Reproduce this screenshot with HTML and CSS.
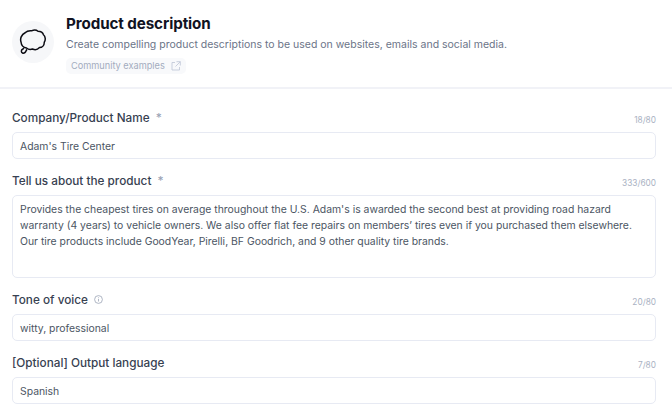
FILE: index.html
```html
<!DOCTYPE html>
<html lang="en">
<head>
<meta charset="utf-8">
<title>Product description</title>
<link rel="stylesheet" href="styles.css">
</head>
<body>
<header class="head">
  <div class="avatar">
    <svg width="28" height="26" viewBox="0 0 28 26" fill="none" stroke="#0b0b12" stroke-width="1.5" stroke-linejoin="round">
      <path d="M6.500 3.500C8.500 1.500 11 2 12.500 1.800C14.500.8 17.500.9 19 2.200C21.500 2.200 23.800 3.500 24.500 5.800C26.500 7.500 26.800 11 25.300 13.200C25.300 16 23.300 18.500 20.500 18.600C18.500 20.800 15.500 21 13.500 20C11.500 20.700 9 20.300 7.500 19C4.500 18.500 2.300 16 2 13C1 10 2 5.500 6.500 3.500Z"/>
      <path d="M5 19.200 3.500 20.300C2 21 2 23.500 3.500 24C5 24.500 6.500 23.500 7 22 7.300 21.200 7.500 20.800 8 20.500"/>
    </svg>
  </div>
  <div class="intro">
    <h1 class="title">Product description</h1>
    <p class="subtitle">Create compelling product descriptions to be used on websites, emails and social media.</p>
    <a class="chip" href="#">Community examples
      <svg width="10" height="10" viewBox="0 0 10 10" fill="none" stroke="#c3cad9" stroke-width=".9">
        <path d="M4 1.500H1v7.500h7.500V6M5.500.7h3.800v3.800M9.300.7 4.500 5.500"/>
      </svg>
    </a>
  </div>
</header>
<main class="form">
  <div class="field">
    <div class="label-row"><span class="label">Company/Product Name<span class="star">*</span></span><span class="count">18/80</span></div>
    <div class="box">Adam's Tire Center</div>
  </div>
  <div class="field">
    <div class="label-row"><span class="label">Tell us about the product<span class="star">*</span></span><span class="count">333/600</span></div>
    <div class="box area">Provides the cheapest tires on average throughout the U.S. Adam's is awarded the second best at providing road hazard warranty (4 years) to vehicle owners. We also offer flat fee repairs on members’ tires even if you purchased them elsewhere. Our tire products include GoodYear, Pirelli, BF Goodrich, and 9 other quality tire brands.</div>
  </div>
  <div class="field">
    <div class="label-row"><span class="label">Tone of voice
      <svg class="info" width="9" height="9" viewBox="0 0 9 9" fill="none" stroke="#9aa3b5" stroke-width=".8"><circle cx="4.500" cy="4.500" r="3.900"/><path d="M4.500 4v2.500M4.500 2.400v.8"/></svg>
    </span><span class="count">20/80</span></div>
    <div class="box">witty, professional</div>
  </div>
  <div class="field">
    <div class="label-row"><span class="label">[Optional] Output language</span><span class="count">7/80</span></div>
    <div class="box">Spanish</div>
  </div>
</main>
</body>
</html>
```
FILE: styles.css
```css
* { box-sizing: border-box; }
html, body { margin: 0; height: 100%; overflow: hidden; }
body { background: #fff; font-family: Inter, "Liberation Sans", sans-serif; color: #374151; }
.head { display: flex; gap: 12px; height: 89px; padding: 13px 12px 0; border-bottom: 2px solid #f1f2f7; }
.avatar { width: 42px; height: 42px; margin-top: 8px; border-radius: 50%; background: #f6f7f9; display: flex; align-items: center; justify-content: center; flex: none; }
.intro { min-width: 0; }
.title { margin: 0; font-size: 15.200px; line-height: 21px; font-weight: 700; color: #111322; letter-spacing: -.1px; }
.subtitle { margin: 3px 0 0; font-size: 10.500px; line-height: 16px; color: #6b7488; white-space: nowrap; }
.chip { display: inline-flex; align-items: center; gap: 6px; height: 16px; margin-top: 4px; padding: 0 5px; border-radius: 5px; background: #f8f9fb; color: #a3acbe; font-size: 9.200px; font-weight: 400; text-decoration: none; }
.form { padding: 22px 16px 0 12px; display: flex; flex-direction: column; gap: 15.500px; }
.label-row { display: flex; justify-content: space-between; align-items: flex-end; height: 15px; margin-bottom: 5.500px; }
.label { font-size: 11.750px; line-height: 15px; font-weight: 500; color: #374151; }
.star { margin-left: 6px; color: #9aa3b5; }
.info { margin-left: 3px; }
.count { padding-bottom: 1px; font-size: 8.300px; line-height: 10px; color: #aab2c3; }
.box { height: 27px; padding: 0 7px; border: 1px solid #e7eaf3; border-radius: 5px; font-size: 10.400px; line-height: 27px; color: #4b5563; }
.area { height: 83px; padding: 6px 7px; line-height: 16px; }
```
